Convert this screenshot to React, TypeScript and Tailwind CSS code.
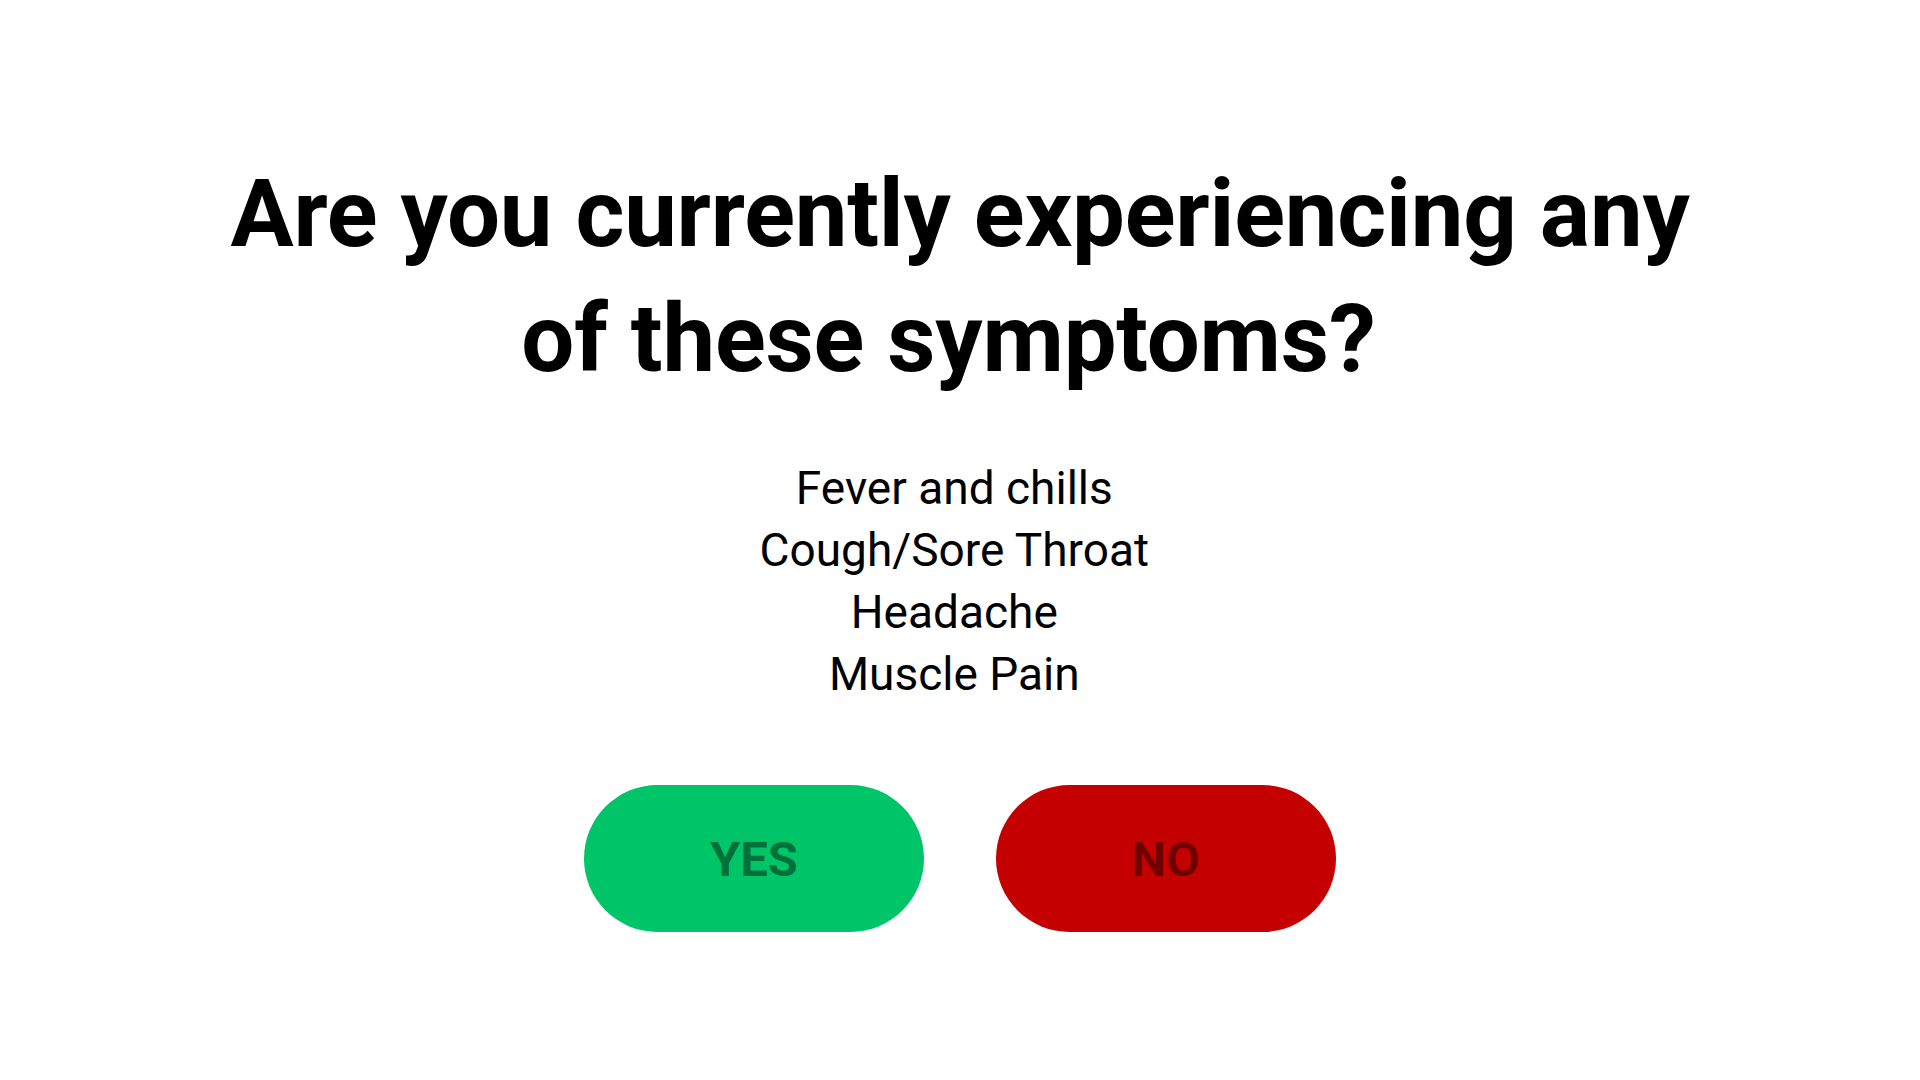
export default function App() {
  const symptoms = ['Fever and chills', 'Cough/Sore Throat', 'Headache', 'Muscle Pain'];

  return (
    <div className="min-h-screen w-full bg-white font-['Roboto','Noto_Sans',sans-serif] text-black">
      <div className="flex flex-col items-center pt-[152px]">
        <h1 className="whitespace-pre text-center text-[94px] font-bold leading-[125px] tracking-[-0.2px]">
          {'Are you currently experiencing any\nof these symptoms? '}
        </h1>

        <ul className="mt-[55px] flex flex-col items-center text-[46px] leading-[62px]">
          {symptoms.map((s) => (
            <li key={s} className="whitespace-pre">
              {s + ' '}
            </li>
          ))}
        </ul>

        <div className="mt-[80px] flex gap-[72px]">
          <button className="flex h-[147px] w-[340px] items-center justify-center rounded-full bg-[#00c468] pt-[3px] text-[49px] font-bold text-[#00713b]">
            YES
          </button>
          <button className="flex h-[147px] w-[340px] items-center justify-center rounded-full bg-[#c40000] pt-[3px] text-[49px] font-bold text-[#700000]">
            NO
          </button>
        </div>
      </div>
    </div>
  );
}
